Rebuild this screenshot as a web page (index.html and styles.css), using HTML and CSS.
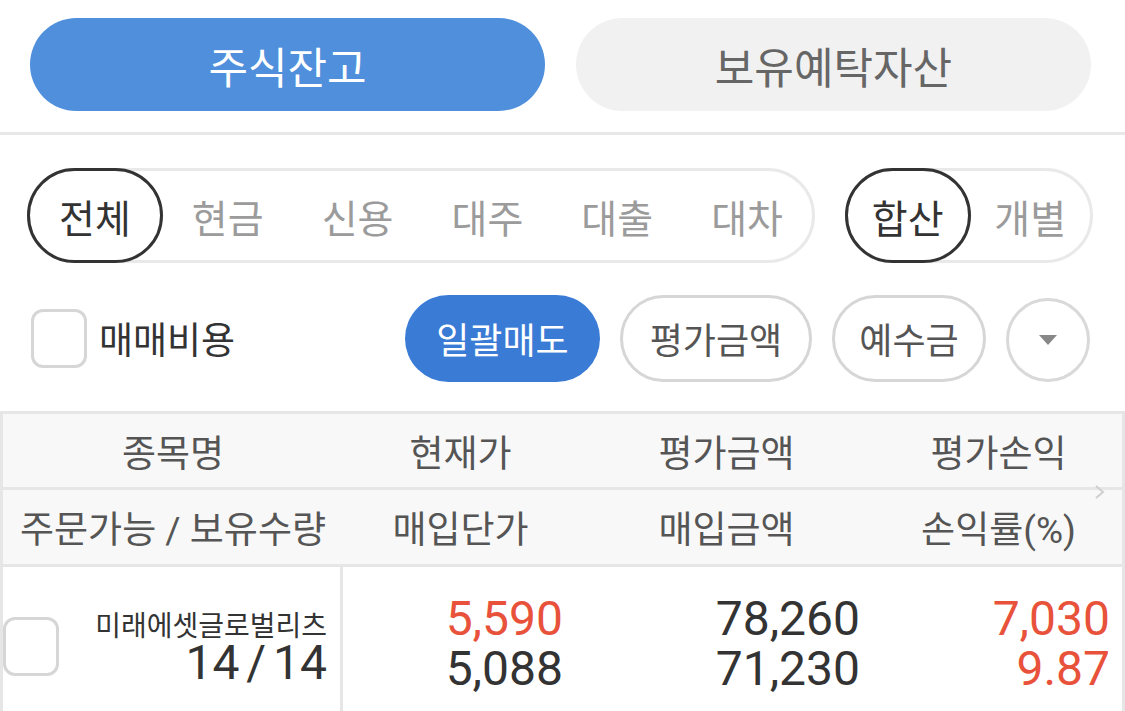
FILE: index.html
```html
<!DOCTYPE html>
<html lang="ko">
<head>
<meta charset="utf-8">
<title>주식잔고</title>
<link rel="stylesheet" href="styles.css">
</head>
<body>
<div class="page">
  <div class="tabs">
    <div class="tab tab-active">주식잔고</div>
    <div class="tab">보유예탁자산</div>
  </div>
  <div class="divider"></div>

  <div class="filters">
    <div class="seg seg-wide">
      <div class="seg-item seg-on">전체</div>
      <div class="seg-item">현금</div>
      <div class="seg-item">신용</div>
      <div class="seg-item">대주</div>
      <div class="seg-item">대출</div>
      <div class="seg-item">대차</div>
    </div>
    <div class="seg seg-narrow">
      <div class="seg-item seg-on">합산</div>
      <div class="seg-item">개별</div>
    </div>
  </div>

  <div class="actions">
    <label class="fee">
      <span class="checkbox"></span>
      <span class="fee-label">매매비용</span>
    </label>
    <div class="action-btns">
      <div class="pill pill-blue">일괄매도</div>
      <div class="pill pill-line pill-eval">평가금액</div>
      <div class="pill pill-line pill-dep">예수금</div>
      <div class="round-btn"><span class="tri"></span></div>
    </div>
  </div>

  <div class="table">
    <div class="thead thead-1">
      <div class="th">종목명</div>
      <div class="th">현재가</div>
      <div class="th">평가금액</div>
      <div class="th">평가손익</div>
    </div>
    <div class="thead thead-2">
      <div class="th">주문가능 / 보유수량</div>
      <div class="th">매입단가</div>
      <div class="th">매입금액</div>
      <div class="th">손익률(%)</div>
    </div>
    <svg class="chev" width="14" height="16" viewBox="0 0 14 16"><polyline points="3,2 10,8 3,14" fill="none" stroke="#cfcfcf" stroke-width="2"/></svg>
    <div class="trow">
      <div class="td td-name">
        <span class="checkbox checkbox-row"></span>
        <div class="name-block">
          <div class="stock-name">미래에셋글로벌리츠</div>
          <div class="num qty">14 / 14</div>
        </div>
      </div>
      <div class="td td-num">
        <div class="num red">5,590</div>
        <div class="num">5,088</div>
      </div>
      <div class="td td-num">
        <div class="num">78,260</div>
        <div class="num">71,230</div>
      </div>
      <div class="td td-num td-last">
        <div class="num red">7,030</div>
        <div class="num red">9.87</div>
      </div>
    </div>
  </div>
</div>
</body>
</html>
```

FILE: styles.css
```css
* { box-sizing: border-box; }
html, body { margin: 0; padding: 0; background: #ffffff; }
body {
  font-family: Roboto, "Noto Sans CJK KR", "Noto Sans", sans-serif;
  color: #333333;
  width: 1125px;
  height: 711px;
  overflow: hidden;
}

.tabs {
  display: flex;
  gap: 31px;
  padding: 18px 34px 0 30px;
}
.tab {
  flex: 1;
  height: 93px;
  border-radius: 47px;
  background: #f1f1f1;
  color: #666666;
  font-size: 43px;
  display: flex;
  align-items: center;
  justify-content: center;
}
.tab-active { background: #4f8fdc; color: #ffffff; }

.divider {
  margin-top: 21px;
  height: 3px;
  background: #e8e8e8;
}

.filters {
  display: flex;
  gap: 30px;
  padding: 33px 0 0 27px;
}
.seg {
  display: flex;
  height: 95px;
  border: 3px solid #e9e9e9;
  border-radius: 48px;
}
.seg-wide { width: 788px; }
.seg-narrow { width: 248px; }
.seg-item {
  flex: 1;
  display: flex;
  align-items: center;
  justify-content: center;
  font-size: 39px;
  color: #9b9b9b;
}
.seg-on {
  margin: -3px 0 -3px -3px;
  border: 3px solid #333333;
  border-radius: 48px;
  color: #333333;
}

.actions {
  display: flex;
  align-items: center;
  justify-content: space-between;
  padding: 31px 35px 0 31px;
}
.fee { display: flex; align-items: center; gap: 12px; }
.checkbox {
  display: block;
  width: 56px;
  height: 59px;
  border: 3px solid #d6d6d6;
  border-radius: 12px;
  background: #ffffff;
}
.fee-label { font-size: 37px; color: #333333; }
.action-btns { display: flex; align-items: center; gap: 20px; }
.pill {
  height: 87px;
  border-radius: 44px;
  display: flex;
  align-items: center;
  justify-content: center;
  font-size: 36px;
}
.pill-blue { width: 195px; background: #3a7bd6; color: #ffffff; }
.pill-line { border: 3px solid #d6d6d6; color: #555555; }
.pill-eval { width: 192px; }
.pill-dep { width: 154px; }
.round-btn {
  width: 84px;
  height: 84px;
  border: 3px solid #d9d9d9;
  border-radius: 50%;
  display: flex;
  align-items: center;
  justify-content: center;
  margin-top: 4px;
}
.tri {
  width: 0;
  height: 0;
  border-left: 9px solid transparent;
  border-right: 9px solid transparent;
  border-top: 10px solid #888888;
}

.table {
  position: relative;
  margin-top: 29px;
  border: 3px solid #e6e6e6;
  border-bottom: none;
}
.thead, .trow {
  display: grid;
  grid-template-columns: 340px 235px 297px 1fr;
}
.thead {
  background: #f8f8f8;
  border-bottom: 3px solid #e6e6e6;
}
.thead-1 { height: 76px; }
.thead-2 { height: 77px; }
.th {
  display: flex;
  align-items: center;
  justify-content: center;
  font-size: 37px;
  color: #555555;
  white-space: nowrap;
}
.chev {
  position: absolute;
  right: 15px;
  top: 70px;
}

.trow { height: 150px; }
.td { padding-top: 27px; }
.td-name {
  display: flex;
  align-items: flex-start;
  border-right: 3px solid #e6e6e6;
  padding: 47px 13px 0 0;
}
.checkbox-row { margin-top: 3px; flex: none; }
.name-block {
  flex: 1;
  text-align: right;
}
.stock-name {
  font-size: 28px;
  line-height: 30px;
  color: #333333;
  margin-top: -2px;
  white-space: nowrap;
}
.name-block .qty { margin-top: -4px; word-spacing: -5px; }
.td-num {
  text-align: right;
  padding-right: 15px;
}
.td-last { padding-right: 12px; }
.num {
  font-size: 48px;
  line-height: 50px;
  color: #333333;
}
.red { color: #e8523b; }
```
